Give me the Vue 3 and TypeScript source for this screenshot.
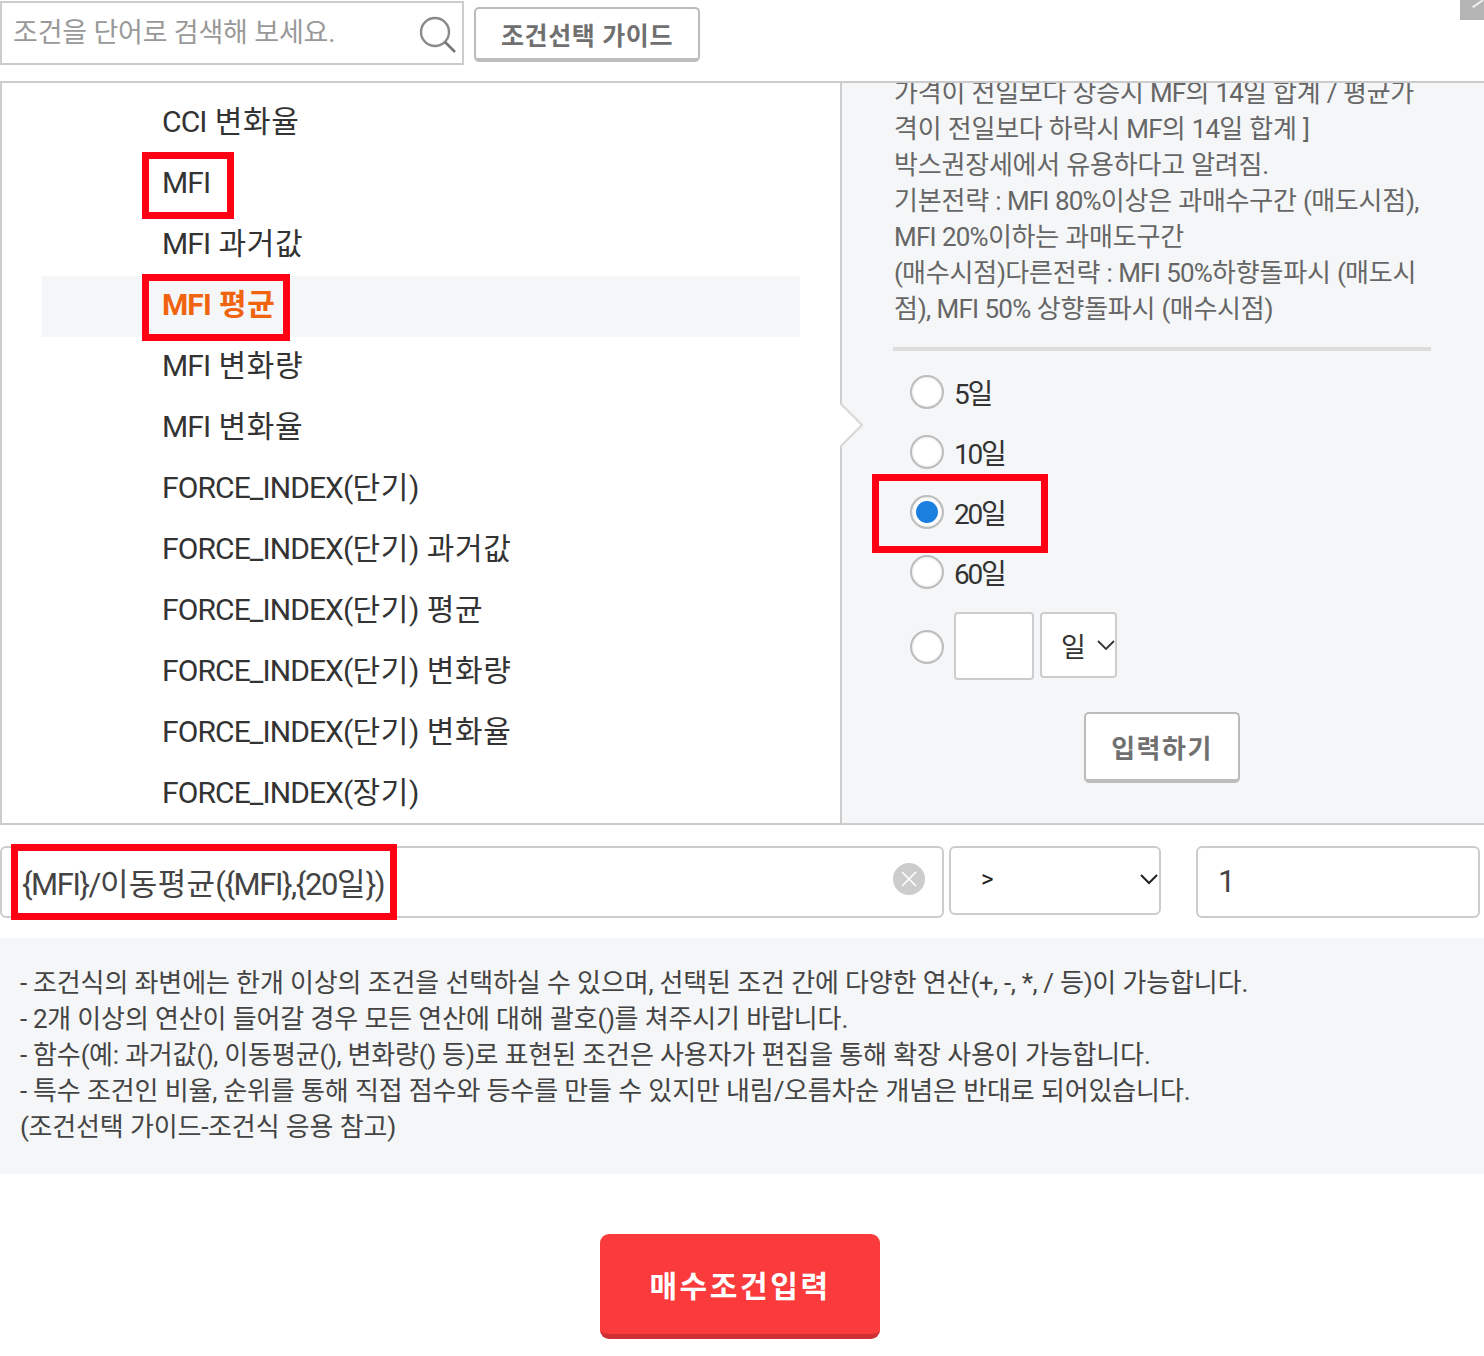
<script setup lang="ts">
interface Run { text: string; ko: boolean }

function toRuns(text: string): Run[] {
  const parts = text.match(/[\uAC00-\uD7A3 ]+|[^\uAC00-\uD7A3 ]+/g) ?? []
  return parts.map((part) => ({ text: part, ko: /[\uAC00-\uD7A3 ]/.test(part) }))
}

const items: string[] = [
  'CCI 변화율', 'MFI', 'MFI 과거값', 'MFI 평균', 'MFI 변화량', 'MFI 변화율',
  'FORCE_INDEX(단기)', 'FORCE_INDEX(단기) 과거값', 'FORCE_INDEX(단기) 평균',
  'FORCE_INDEX(단기) 변화량', 'FORCE_INDEX(단기) 변화율', 'FORCE_INDEX(장기)',
]
const activeItem = 'MFI 평균'
const descLines: string[] = [
  '가격이 전일보다 상승시 MF의 14일 합계 / 평균가',
  '격이 전일보다 하락시 MF의 14일 합계 ]',
  '박스권장세에서 유용하다고 알려짐.',
  '기본전략 : MFI 80%이상은 과매수구간 (매도시점),',
  'MFI 20%이하는 과매도구간',
  '(매수시점)다른전략 : MFI 50%하향돌파시 (매도시',
  '점), MFI 50% 상향돌파시 (매수시점)',
]
const periods: { label: string; on: boolean }[] = [
  { label: '5일', on: false },
  { label: '10일', on: false },
  { label: '20일', on: true },
  { label: '60일', on: false },
]
const notes: string[] = [
  '- 조건식의 좌변에는 한개 이상의 조건을 선택하실 수 있으며, 선택된 조건 간에 다양한 연산(+, -, *, / 등)이 가능합니다.',
  '- 2개 이상의 연산이 들어갈 경우 모든 연산에 대해 괄호()를 쳐주시기 바랍니다.',
  '- 함수(예: 과거값(), 이동평균(), 변화량() 등)로 표현된 조건은 사용자가 편집을 통해 확장 사용이 가능합니다.',
  '- 특수 조건인 비율, 순위를 통해 직접 점수와 등수를 만들 수 있지만 내림/오름차순 개념은 반대로 되어있습니다.',
  '(조건선택 가이드-조건식 응용 참고)',
]
const formula = '{MFI}/이동평균({MFI},{20일})'
</script>

<template>
  <div class="page">
    <header class="top">
      <div class="search">
        <span class="placeholder">조건을 단어로 검색해 보세요.</span>
        <svg class="search-icon" width="38" height="38" viewBox="0 0 38 38" fill="none">
          <circle cx="16" cy="16" r="14" stroke="#8a8a8a" stroke-width="2.4" />
          <path d="M26 26 L36 36" stroke="#777" stroke-width="2.6" />
        </svg>
      </div>
      <button class="btn guide">조건선택 가이드</button>
      <span class="corner"></span>
    </header>

    <section class="main">
      <ul class="list">
        <li v-for="item in items" :key="item" class="row" :class="{ active: item === activeItem }">
          <span v-for="(r, i) in toRuns(item)" :key="i" :class="{ ko: r.ko }">{{ r.text }}</span>
        </li>
      </ul>
      <div class="panel">
        <div class="desc">
          <div v-for="line in descLines" :key="line">
            <span v-for="(r, i) in toRuns(line)" :key="i" :class="{ ko: r.ko }">{{ r.text }}</span>
          </div>
        </div>
        <div class="divider"></div>
        <div class="periods">
          <label v-for="p in periods" :key="p.label" class="period">
            <span class="radio" :class="{ on: p.on }"></span>
            <span>
              <span v-for="(r, i) in toRuns(p.label)" :key="i" :class="{ ko: r.ko }">{{ r.text }}</span>
            </span>
          </label>
          <div class="custom">
            <span class="radio"></span>
            <span class="day-input"></span>
            <span class="day-select">
              <span>일</span>
              <svg width="18" height="12" viewBox="0 0 18 12" fill="none"><path d="M1 2 L9 10 L17 2" stroke="#333" stroke-width="1.8" /></svg>
            </span>
          </div>
        </div>
        <div class="submit-row">
          <button class="btn enter">입력하기</button>
        </div>
      </div>
      <svg class="notch" width="23" height="44" viewBox="0 0 23 44">
        <path d="M0 0 L22 22 L0 44 Z" fill="#fff" />
        <path d="M0 0 L22 22 L0 44" fill="none" stroke="#d8d8d8" stroke-width="2.2" />
      </svg>
    </section>

    <section class="formula">
      <div class="field left">
        <span class="formula-text">
          <span v-for="(r, i) in toRuns(formula)" :key="i" :class="{ ko: r.ko }">{{ r.text }}</span>
        </span>
        <span class="clear">
          <svg width="18" height="18" viewBox="0 0 18 18" fill="none"><path d="M2 2 L16 16 M16 2 L2 16" stroke="#fff" stroke-width="1.6" /></svg>
        </span>
      </div>
      <div class="op">
        <span>&gt;</span>
        <svg width="20" height="12" viewBox="0 0 20 12" fill="none"><path d="M2 2 L10 10 L18 2" stroke="#222" stroke-width="2" /></svg>
      </div>
      <div class="field value"><span class="value-text">1</span></div>
    </section>

    <section class="notes">
      <div v-for="note in notes" :key="note">
        <span v-for="(r, i) in toRuns(note)" :key="i" :class="{ ko: r.ko }">{{ r.text }}</span>
      </div>
    </section>

    <div class="actions">
      <button class="buy">매수조건입력</button>
    </div>

    <span class="mark m1"></span>
    <span class="mark m2"></span>
    <span class="mark m3"></span>
    <span class="mark m4"></span>
  </div>
</template>

<style scoped>
.page {
  position: relative;
  width: 1484px;
  height: 1356px;
  overflow: hidden;
  background: #fff;
  font-family: Roboto, "Noto Sans CJK KR", sans-serif;
  color: #333;
}
.ko { letter-spacing: var(--ko, 0); }
.top {
  height: 81px;
  display: flex;
  align-items: flex-start;
  gap: 10px;
  padding-top: 1px;
  box-sizing: border-box;
  position: relative;
}
.search {
  width: 464px;
  height: 64px;
  box-sizing: border-box;
  border: 2px solid #ccc;
  display: flex;
  align-items: center;
  justify-content: space-between;
  padding: 0 5px 0 11px;
}
.placeholder {
  font-size: 27px;
  color: #999;
  letter-spacing: -0.2px;
  position: relative;
  top: -3px;
}
.search-icon { position: relative; top: 2px; }
.btn {
  font-family: inherit;
  background: #fff;
  border: 2px solid #bbb;
  border-bottom: 4px solid #bdbdbd;
  border-radius: 5px;
  color: #707070;
  font-weight: 700;
  font-size: 25px;
  box-sizing: border-box;
  padding: 0;
}
.guide {
  width: 226px;
  height: 55px;
  margin-top: 6px;
  letter-spacing: 0.6px;
}
.corner {
  position: absolute;
  top: 0;
  right: 0;
  width: 24px;
  height: 20px;
  background: #b4b4b4;
  overflow: hidden;
}
.corner::after {
  content: "";
  position: absolute;
  left: 17px;
  top: -3px;
  width: 1.5px;
  height: 13px;
  background: #eee;
  transform: rotate(55deg);
}
.main {
  position: relative;
  height: 744px;
  box-sizing: border-box;
  border: 2px solid #ccc;
  border-right: 0;
  display: grid;
  grid-template-columns: 838px 1fr;
}
.list {
  list-style: none;
  margin: 0;
  padding: 10px 40px 0;
  overflow: hidden;
  height: 740px;
  --ko: 0.7px;
}
.row {
  height: 61px;
  line-height: 58px;
  padding-left: 120px;
  font-size: 30px;
  letter-spacing: -0.9px;
  color: #333;
}
.row.active {
  background: #f5f6f8;
  color: #f0640f;
  font-weight: 700;
}
.panel {
  height: 740px;
  background: #f5f6f8;
  border-left: 2px solid #ccc;
  overflow: hidden;
  display: flex;
  flex-direction: column;
  padding: 0 53px 0 51px;
  box-sizing: border-box;
}
.notch {
  position: absolute;
  left: 838px;
  top: 320px;
}
.desc {
  margin-top: -8px;
  padding-left: 1px;
  font-size: 26px;
  line-height: 36px;
  color: #666;
  letter-spacing: -0.8px;
  white-space: nowrap;
  --ko: -0.2px;
}
.divider {
  height: 4px;
  background: #ddd;
  margin-top: 20px;
  flex: none;
}
.periods {
  margin-top: 11px;
  padding-left: 17px;
  display: flex;
  flex-direction: column;
  color: #333;
}
.period {
  height: 60px;
  display: flex;
  align-items: center;
  gap: 10px;
  font-size: 28px;
  letter-spacing: -2.2px;
  --ko: 0;
}
.radio {
  width: 34px;
  height: 34px;
  box-sizing: border-box;
  border: 2px solid #bdbdbd;
  border-radius: 50%;
  background: #fff;
  box-shadow: inset 0 0 2px #ccc;
  flex: none;
  position: relative;
}
.radio.on::after {
  content: "";
  position: absolute;
  inset: 4px;
  border-radius: 50%;
  background: #1b7fe0;
}
.custom {
  margin-top: 10px;
  display: flex;
  align-items: flex-start;
  gap: 6px;
}
.custom .radio { margin: 18px 4px 0 0; }
.day-input {
  width: 80px;
  height: 68px;
  box-sizing: border-box;
  background: #fff;
  border: 2px solid #ccc;
  border-radius: 4px;
}
.day-select {
  width: 77px;
  height: 66px;
  box-sizing: border-box;
  background: #fff;
  border: 2px solid #ccc;
  border-radius: 4px;
  display: flex;
  align-items: center;
  padding-left: 19px;
  gap: 11px;
  font-size: 27px;
}
.submit-row {
  margin-top: 32px;
  padding-left: 191px;
}
.enter {
  width: 156px;
  height: 71px;
  font-size: 26px;
  letter-spacing: 1.5px;
}
.formula {
  margin-top: 21px;
  display: flex;
  align-items: flex-start;
}
.field {
  height: 72px;
  box-sizing: border-box;
  background: #fff;
  border: 2px solid #ccc;
  border-radius: 6px;
  display: flex;
  align-items: center;
  font-size: 31px;
  color: #444;
}
.left {
  width: 944px;
  padding: 0 18px 0 20px;
  justify-content: space-between;
  letter-spacing: -1.4px;
  --ko: 0.3px;
}
.formula-text { position: relative; top: -1px; }
.clear {
  width: 32px;
  height: 32px;
  border-radius: 50%;
  background: #ccc;
  display: flex;
  align-items: center;
  justify-content: center;
  position: relative;
  top: -3px;
  left: 1px;
}
.op {
  width: 212px;
  height: 69px;
  margin-left: 5px;
  box-sizing: border-box;
  border: 2px solid #ccc;
  border-radius: 6px;
  display: flex;
  align-items: center;
  justify-content: space-between;
  padding: 0 0 3px 30px;
  font-size: 24px;
  color: #222;
}
.value {
  width: 284px;
  margin-left: 35px;
  padding-left: 20px;
}
.value-text { position: relative; top: -1px; }
.notes {
  margin-top: 20px;
  height: 236px;
  box-sizing: border-box;
  padding: 27px 20px 0;
  background: #f5f6f8;
  font-size: 26px;
  line-height: 36px;
  color: #444;
  letter-spacing: -0.5px;
  white-space: nowrap;
  --ko: -0.12px;
}
.actions {
  margin-top: 60px;
  display: flex;
  justify-content: center;
  padding-right: 4px;
}
.buy {
  width: 280px;
  height: 105px;
  border: 0;
  border-bottom: 5px solid #cf3034;
  border-radius: 9px;
  background: #fb3a3c;
  color: #fff;
  font-family: inherit;
  font-weight: 700;
  font-size: 30px;
  letter-spacing: 2.6px;
}
.mark {
  position: absolute;
  box-sizing: border-box;
  border: 7px solid #ff0015;
  pointer-events: none;
}
.m1 { left: 142px; top: 152px; width: 92px; height: 67px; }
.m2 { left: 142px; top: 274px; width: 148px; height: 67px; }
.m3 { left: 872px; top: 474px; width: 176px; height: 79px; }
.m4 { left: 11px; top: 844px; width: 386px; height: 76px; }
</style>
